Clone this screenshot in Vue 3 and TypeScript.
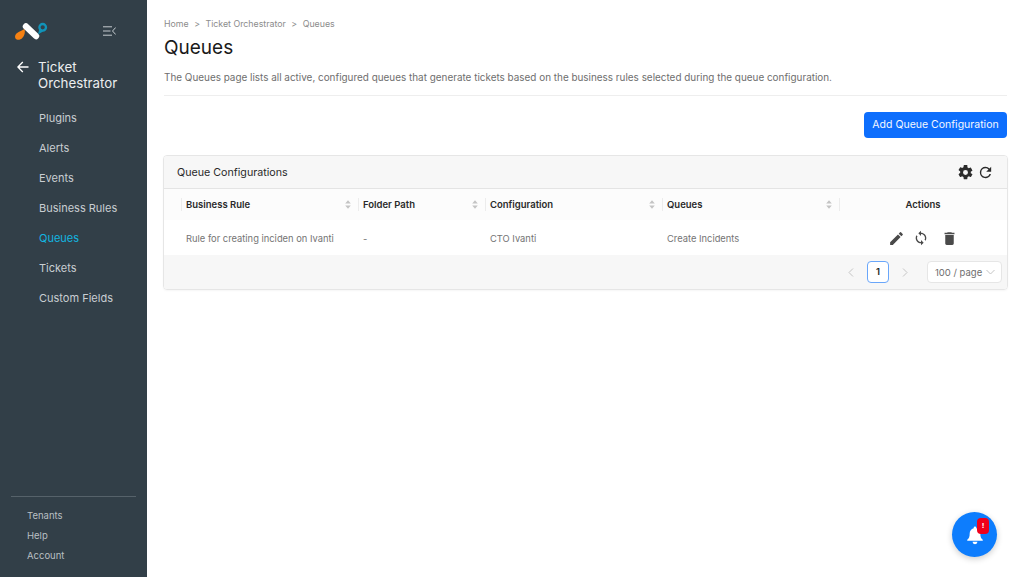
<script setup lang="ts">
const navItems = ['Plugins', 'Alerts', 'Events', 'Business Rules', 'Queues', 'Tickets', 'Custom Fields']
const footerItems = ['Tenants', 'Help', 'Account']
const columns = [
  { label: 'Business Rule', cls: 'col-rule' },
  { label: 'Folder Path', cls: 'col-path' },
  { label: 'Configuration', cls: 'col-config' },
  { label: 'Queues', cls: 'col-queues' },
]
</script>

<template>
  <div class="shell">
    <aside class="sidebar">
      <div class="brand">
        <svg class="logo" width="34" height="20" viewBox="0 0 34 20">
          <path d="M10.500 8 C11.500 11 10.500 14.500 8.500 16.800 C6.500 19.200 2.800 19.500 1.500 17.500 C.3 15.500 1.500 13 3.500 11.800 C5.500 10.500 8 9.500 10.500 8Z" fill="#f58113" />
          <path d="M12 5.500 L22 15" stroke="#fff" stroke-width="6.400" stroke-linecap="round" />
          <path d="M24 13.500 L25.500 7 L29 10.500Z" fill="#1193b8" />
          <circle cx="28.700" cy="6.300" r="3.300" fill="#323f48" stroke="#1193b8" stroke-width="2.300" />
        </svg>
        <svg class="collapse" width="13" height="10" viewBox="0 0 13 10" fill="none" stroke="#c5cbcf" stroke-width="1">
          <path d="M0 .8h9M0 5h7.500M0 9.200h9M12.700 1.500 9.500 5l3.200 3.500" />
        </svg>
      </div>
      <div class="section-title">
        <svg width="12" height="12" viewBox="0 0 12 12" fill="none" stroke="#fff" stroke-width="1.300">
          <path d="M11.500 6H1M5.800 1 .9 6l4.900 5" />
        </svg>
        <span>Ticket Orchestrator</span>
      </div>
      <nav class="nav">
        <a v-for="item in navItems" :key="item" class="nav-item" :class="{ active: item === 'Queues' }">{{ item }}</a>
      </nav>
      <div class="side-footer">
        <a v-for="item in footerItems" :key="item" class="footer-item">{{ item }}</a>
      </div>
    </aside>

    <main class="content">
      <div class="breadcrumb">
        <span>Home</span><span>&gt;</span><span>Ticket Orchestrator</span><span>&gt;</span><span>Queues</span>
      </div>
      <h1>Queues</h1>
      <p class="intro">
        The Queues page lists all active, configured queues that generate tickets based on the business rules selected during the queue configuration.
      </p>
      <div class="toolbar">
        <button class="primary" type="button">Add Queue Configuration</button>
      </div>

      <section class="card">
        <header class="card-head">
          <span>Queue Configurations</span>
          <div class="head-icons">
            <svg width="17" height="17" viewBox="0 0 24 24" fill="#2b2b2b">
              <path fill-rule="evenodd" d="M19.430 12.980c.04-.32.07-.64.07-.98s-.03-.66-.07-.98l2.110-1.650a.5.5 0 0 0 .12-.64l-2-3.460a.5.5 0 0 0-.61-.22l-2.490 1a7.300 7.300 0 0 0-1.690-.98l-.38-2.650A.49.49 0 0 0 14 1.500h-4a.49.49 0 0 0-.49.42l-.38 2.650c-.61.25-1.170.59-1.690.98l-2.490-1a.5.5 0 0 0-.61.22l-2 3.460a.49.49 0 0 0 .12.64l2.110 1.650c-.04.32-.07.65-.07.98s.03.66.07.98l-2.110 1.650a.5.5 0 0 0-.12.64l2 3.460c.12.22.39.3.61.22l2.490-1c.52.4 1.080.73 1.690.98l.38 2.650c.03.24.24.42.49.42h4c.25 0 .46-.18.49-.42l.38-2.650c.61-.25 1.170-.59 1.690-.98l2.490 1c.23.09.49 0 .61-.22l2-3.460a.5.5 0 0 0-.12-.64zM12 15.500a3.500 3.500 0 1 1 0-7 3.500 3.500 0 0 1 0 7z" />
            </svg>
            <svg width="17" height="17" viewBox="0 0 24 24" fill="#2b2b2b">
              <path d="M17.650 6.350A7.960 7.960 0 0 0 12 4a8 8 0 1 0 7.730 10h-2.080A6 6 0 1 1 12 6c1.660 0 3.140.69 4.220 1.780L13 11h7V4z" />
            </svg>
          </div>
        </header>

        <div class="table-row table-header">
          <div v-for="col in columns" :key="col.label" class="cell" :class="col.cls">
            <span>{{ col.label }}</span>
            <svg class="sorter" width="6" height="9" viewBox="0 0 6 9" fill="#c4c4c4">
              <path d="M3 .3 5.800 3.600H.2zM3 8.700.2 5.400h5.600z" />
            </svg>
          </div>
          <div class="cell col-actions">Actions</div>
        </div>

        <div class="table-row table-body">
          <div class="cell col-rule">Rule for creating inciden on Ivanti</div>
          <div class="cell col-path">-</div>
          <div class="cell col-config">CTO Ivanti</div>
          <div class="cell col-queues">Create Incidents</div>
          <div class="cell col-actions actions">
            <svg width="17" height="17" viewBox="0 0 24 24" fill="#4a4a4a">
              <path d="M3 17.250V21h3.750L17.810 9.940l-3.750-3.750zM20.710 7.040a1 1 0 0 0 0-1.410l-2.340-2.340a1 1 0 0 0-1.410 0l-1.830 1.830 3.750 3.750z" />
            </svg>
            <svg width="16" height="16" viewBox="0 0 24 24" fill="#4a4a4a">
              <path d="M12 4V1L8 5l4 4V6c3.310 0 6 2.690 6 6 0 1.010-.25 1.970-.7 2.800l1.460 1.460A7.930 7.930 0 0 0 20 12c0-4.420-3.580-8-8-8zm0 14c-3.310 0-6-2.690-6-6 0-1.010.25-1.970.7-2.800L5.240 7.740A7.930 7.930 0 0 0 4 12c0 4.420 3.580 8 8 8v3l4-4-4-4z" />
            </svg>
            <svg class="trash" width="17" height="17" viewBox="0 0 24 24" fill="#4a4a4a">
              <path d="M6 19c0 1.100.9 2 2 2h8a2 2 0 0 0 2-2V7H6zM19 4h-3.500l-1-1h-5l-1 1H5v2h14z" />
            </svg>
          </div>
        </div>

        <footer class="pager">
          <svg width="6" height="9" viewBox="0 0 6 9" fill="none" stroke="#c4c4c4" stroke-width="1"><path d="M5 .5 1 4.500 5 8.500" /></svg>
          <span class="page-current">1</span>
          <svg width="6" height="9" viewBox="0 0 6 9" fill="none" stroke="#c4c4c4" stroke-width="1"><path d="M1 .5l4 4-4 4" /></svg>
          <div class="page-size">
            <span>100 / page</span>
            <svg width="9" height="6" viewBox="0 0 9 6" fill="none" stroke="#c4c4c4" stroke-width="1"><path d="M.5 1l4 4 4-4" /></svg>
          </div>
        </footer>
      </section>
    </main>

    <button class="notify" type="button" aria-label="Notifications">
      <svg width="18" height="20" viewBox="0 0 22 24" fill="#fff">
        <path d="M11 1.500a1.600 1.600 0 0 0-1.600 1.600v.6C6.300 4.500 4.500 7.100 4.500 10.200c0 4.300-1 5.900-3 7.600v1.200h19v-1.200c-2-1.700-3-3.300-3-7.600 0-3.100-1.800-5.700-4.900-6.500v-.6A1.600 1.600 0 0 0 11 1.500zM8 20.300a3 3 0 0 0 6 0z" />
      </svg>
      <span class="badge">!</span>
    </button>
  </div>
</template>

<style>
html,
body {
  margin: 0;
  background: #fff;
}
</style>

<style scoped>
.shell {
  display: flex;
  width: 1024px;
  height: 577px;
  overflow: hidden;
  position: relative;
  font-family: Inter, 'Liberation Sans', sans-serif;
  color: #1f1f1f;
}

.sidebar {
  width: 147px;
  flex: none;
  display: flex;
  flex-direction: column;
  background: #323f48;
  color: #c9ced2;
}

.brand {
  display: flex;
  align-items: center;
  justify-content: space-between;
  padding: 21px 31px 0 14px;
  height: 20px;
}

.section-title {
  display: flex;
  align-items: flex-start;
  gap: 9px;
  margin-top: 18px;
  padding-left: 17px;
  color: #eceeef;
  font-size: 13.300px;
  line-height: 16px;
}

.section-title svg {
  margin-top: 2px;
  flex: none;
}

.nav {
  display: flex;
  flex-direction: column;
  margin-top: 12px;
}

.nav-item {
  height: 30px;
  line-height: 30px;
  padding-left: 39px;
  font-size: 11px;
}

.nav-item.active {
  color: #13b5e0;
}

.side-footer {
  margin: auto 11px 0;
  padding: 9px 0 11px 16px;
  border-top: 1px solid #56626a;
  display: flex;
  flex-direction: column;
}

.footer-item {
  height: 20px;
  line-height: 20px;
  font-size: 9.500px;
  color: #b9bfc3;
}

.content {
  flex: 1;
  min-width: 0;
  padding: 18px 17px 0;
}

.breadcrumb {
  display: flex;
  gap: 5.500px;
  font-size: 8.800px;
  line-height: 11px;
  color: #8c8c8c;
}

h1 {
  margin: 6px 0 0;
  font-size: 19px;
  line-height: 26px;
  font-weight: 400;
  color: #1a1a1a;
}

.intro {
  margin: 9px 0 0;
  padding-bottom: 11px;
  border-bottom: 1px solid #eeeeee;
  font-size: 9.920px;
  line-height: 14px;
  color: #6e6e6e;
  white-space: nowrap;
}

.toolbar {
  display: flex;
  justify-content: flex-end;
  margin-top: 16px;
}

.primary {
  width: 143px;
  height: 26px;
  border: 0;
  border-radius: 4px;
  background: #0d6efd;
  color: #f3f7ff;
  font: 400 10.500px/26px Inter, 'Liberation Sans', sans-serif;
  padding: 0;
}

.card {
  margin: 17px -1px 0;
  border: 1px solid #e6e6e6;
  border-radius: 4px;
  box-shadow: 0 1px 2px rgba(0, 0, 0, 0.04);
  overflow: hidden;
}

.card-head {
  display: flex;
  align-items: center;
  justify-content: space-between;
  height: 32px;
  padding: 0 13px 0 13px;
  background: #f7f7f7;
  border-bottom: 1px solid #e4e4e4;
  font-size: 10.700px;
  color: #2a2a2a;
}

.head-icons {
  display: flex;
  align-items: center;
  gap: 3px;
}

.table-row {
  display: flex;
  align-items: center;
}

.table-header {
  height: 31px;
  background: #fcfcfc;
  font-size: 9.500px;
  font-weight: 600;
  color: #2a2a2a;
}

.table-body {
  box-sizing: border-box;
  height: 35px;
  padding-top: 1px;
  background: #fff;
  font-size: 9.350px;
  color: #747474;
}

.cell {
  display: flex;
  align-items: center;
  justify-content: space-between;
  box-sizing: border-box;
  padding: 0 7px 0 5px;
  height: 100%;
}

.table-header .cell {
  position: relative;
}

.table-header .cell::before {
  content: '';
  position: absolute;
  left: 0;
  top: 9px;
  bottom: 9px;
  width: 1px;
  background: #ececec;
}

.col-rule {
  width: 177px;
  margin-left: 17px;
}

.col-path {
  width: 127px;
}

.col-config {
  width: 177px;
}

.col-queues {
  width: 177px;
}

.col-actions {
  flex: 1;
  justify-content: center;
  padding: 0 5px;
}

.actions {
  justify-content: flex-start;
  gap: 8px;
  padding-left: 49px;
}

.trash {
  margin-left: 4px;
}

.pager {
  display: flex;
  align-items: center;
  justify-content: flex-end;
  height: 34px;
  padding-right: 5px;
  background: #f7f7f7;
}

.page-current {
  width: 22px;
  height: 22px;
  box-sizing: border-box;
  margin: 0 13px;
  border: 1px solid #69a6fa;
  border-radius: 4px;
  background: #fff;
  text-align: center;
  font-size: 9.500px;
  font-weight: 600;
  line-height: 20px;
  color: #222;
}

.page-size {
  display: flex;
  align-items: center;
  justify-content: space-between;
  box-sizing: border-box;
  width: 75px;
  height: 22px;
  margin-left: 19px;
  padding: 0 6px 0 7px;
  border: 1px solid #e6e6e6;
  border-radius: 4px;
  background: #fff;
  font-size: 9.500px;
  color: #6e6e6e;
}

.notify {
  position: absolute;
  left: 952px;
  top: 512px;
  width: 45px;
  height: 45px;
  padding: 0;
  border: 0;
  border-radius: 50%;
  background: #0d7dfd;
  box-shadow: 0 2px 6px rgba(0, 0, 0, 0.2);
  display: flex;
  align-items: center;
  justify-content: center;
}

.badge {
  position: absolute;
  left: 25px;
  top: 6px;
  width: 12px;
  height: 16px;
  border-radius: 4px;
  background: #f0001c;
  color: #fff;
  font-size: 8px;
  font-weight: 700;
  line-height: 16px;
  text-align: center;
}
</style>
